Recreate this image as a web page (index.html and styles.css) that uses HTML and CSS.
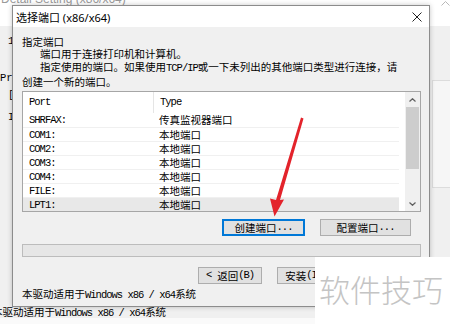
FILE: index.html
```html
<!DOCTYPE html>
<html lang="zh-CN">
<head>
  <meta charset="UTF-8" />
  <title>选择端口</title>
  <link rel="stylesheet" href="styles.css">
</head>
<body>
  <div class="screen">
    <div class="parent">
      <div class="parent-title"><span>Detail Setting (x86/x64)</span></div>
      <div class="parent-body">
        <div class="stub s1">1</div>
        <div class="stub s2">Pr</div>
        <div class="stub s3">[</div>
        <div class="stub s4">I</div>
      </div>
      <div class="parent-foot">本驱动适用于<span class="en">Windows x86 / x64</span>系统</div>
      <div class="parent-bottom"></div>
      <div class="parent-panel"></div>
      <svg class="parent-scroll" width="9" height="5" viewBox="0 0 9 5"><polyline points="0.5,4.5 4.5,0.5 8.5,4.5" fill="none" stroke="#b8b8b8" stroke-width="1"/></svg>
    </div>

    <div class="dialog">
      <div class="titlebar">
        <span class="title">选择端口 (x86/x64)</span>
        <svg class="close" width="10" height="10" viewBox="0 0 10 10"><path d="M0.5 0.5 L9.5 9.5 M9.5 0.5 L0.5 9.5" stroke="#222" stroke-width="1"/></svg>
      </div>
      <div class="content">
        <div class="heading">指定端口</div>
        <div class="line indent">端口用于连接打印机和计算机。</div>
        <div class="line indent">指定使用的端口。如果使用<span class="en">TCP/IP</span>或一下未列出的其他端口类型进行连接，请</div>
        <div class="line">创建一个新的端口。</div>

        <div class="listbox">
          <div class="rows">
            <div class="row head"><div class="cell en c1">Port</div><div class="cell en">Type</div></div>
            <div class="row"><div class="cell en c1">SHRFAX:</div><div class="cell">传真监视器端口</div></div>
            <div class="row"><div class="cell en c1">COM1:</div><div class="cell">本地端口</div></div>
            <div class="row"><div class="cell en c1">COM2:</div><div class="cell">本地端口</div></div>
            <div class="row"><div class="cell en c1">COM3:</div><div class="cell">本地端口</div></div>
            <div class="row"><div class="cell en c1">COM4:</div><div class="cell">本地端口</div></div>
            <div class="row"><div class="cell en c1">FILE:</div><div class="cell">本地端口</div></div>
            <div class="row selected"><div class="cell en c1">LPT1:</div><div class="cell">本地端口</div></div>
          </div>
          <div class="scrollbar">
            <div class="sb-arrow"><svg width="7" height="4" viewBox="0 0 7 4"><polyline points="0.5,3.5 3.5,0.7 6.5,3.5" fill="none" stroke="#606060" stroke-width="1.2"/></svg></div>
            <div class="sb-thumb"></div>
            <div class="sb-space"></div>
            <div class="sb-arrow"><svg width="7" height="4" viewBox="0 0 7 4"><polyline points="0.5,0.5 3.5,3.3 6.5,0.5" fill="none" stroke="#606060" stroke-width="1.2"/></svg></div>
          </div>
        </div>

        <div class="btn-row">
          <div class="btn default create">创建端口<span class="en">...</span></div>
          <div class="btn config">配置端口<span class="en">...</span></div>
        </div>

        <div class="progress"></div>

        <div class="btn-row nav">
          <div class="btn"><span class="en lt">&lt;</span>返回<span class="en">(B)</span></div>
          <div class="btn">安装<span class="en">(I) &gt;</span></div>
          <div class="btn">取消</div>
        </div>

        <div class="footnote">本驱动适用于<span class="en">Windows x86 / x64</span>系统</div>
      </div>
    </div>

    <svg class="arrow" width="450" height="324" viewBox="0 0 450 324">
      <polygon points="301,117.5 303.5,118.5 280,200 284,199.5 274.5,216.5 270,198.5 276,200" fill="#e3232b"/>
    </svg>

    <div class="watermark">软件技巧</div>
  </div>
</body>
</html>
```

FILE: styles.css
```css
body { margin: 0; background: #f0f0f0; font-family: "Noto Sans CJK SC", sans-serif; color: #000; }
.screen { position: relative; width: 450px; height: 324px; overflow: hidden; background: #f0f0f0; }
.en { font-family: "Liberation Mono", "Noto Sans CJK SC", monospace; letter-spacing: -1px; }

/* parent window behind the dialog */
.parent { display: flex; flex-direction: column; height: 324px; }
.parent-title { height: 26px; background: #fff; overflow: hidden; flex: none; }
.parent-title span { display: block; margin-top: -8px; padding-left: 1px; font: 12px/14px "Liberation Sans", sans-serif; color: #9a9a9a; }
.parent-body { flex: 1; font: 10.5px/13px "Liberation Mono", monospace; }
.stub { line-height: 13px; }
.s1 { margin-top: 9px; padding-left: 8px; }
.s2 { margin-top: 24px; padding-left: 0; }
.s3 { margin-top: 4px; padding-left: 8px; }
.s4 { margin-top: 9px; padding-left: 8px; }
.parent-foot { flex: none; height: 13px; line-height: 13px; font-size: 10.5px; margin-left: -8px; white-space: nowrap; }
.parent-bottom { flex: none; height: 6px; background: #fafafa; }
.parent-panel { position: absolute; left: 432px; top: 80px; width: 24px; height: 106px; border: 1px solid #dcdcdc; background: #f6f6f6; }
.parent-scroll { position: absolute; left: 441px; top: 1px; }

/* dialog window */
.dialog { position: absolute; left: 12px; top: 5px; width: 418px; height: 302px; box-sizing: border-box; border: 1px solid #8c8c8c; background: #f0f0f0; box-shadow: 0 0 5px rgba(0,0,0,0.22); display: flex; flex-direction: column; }
.titlebar { height: 21px; background: #fff; display: flex; align-items: center; justify-content: space-between; padding: 0 7px 0 3px; flex: none; }
.title { font-size: 11px; font-family: "Noto Sans", "Noto Sans CJK SC", sans-serif; color: #000; }
.close { display: block; }
.content { padding: 9px 8px 0 9px; font-size: 10.5px; }
.heading { line-height: 11px; }
.line { line-height: 13px; white-space: nowrap; }
.indent { padding-left: 18px; }

.listbox { margin-top: 3px; height: 121px; box-sizing: border-box; border: 1px solid #a6a6a6; background: #fff; display: flex; }
.rows { flex: 1; }
.row { display: flex; height: 14px; line-height: 14px; box-sizing: border-box; }
.row + .row { border-top: 1px solid #f0f0f0; }
.row.head { height: 21px; line-height: 21px; }
.row.head + .row { border-top: none; }
.row.head .c1 { border-right: 1px solid #e5e5e5; }
.cell { padding-left: 6px; white-space: nowrap; }
.c1 { width: 124px; flex: none; }
.row.selected { background: #e8e8e8; }
.scrollbar { width: 15px; margin-left: 6px; background: #f0f0f0; display: flex; flex-direction: column; }
.sb-arrow { height: 15px; display: flex; align-items: center; justify-content: center; }
.sb-arrow svg { display: block; }
.sb-thumb { height: 62px; margin: 0 1px; background: #cdcdcd; }
.sb-space { flex: 1; }

.btn-row { display: flex; justify-content: flex-end; gap: 15px; margin-top: 7px; padding-right: 10px; }
.btn { height: 17px; box-sizing: border-box; border: 1px solid #adadad; background: #e1e1e1; display: flex; align-items: center; justify-content: center; line-height: 15px; white-space: nowrap; width: 64px; }
.btn .lt { margin-right: 6px; }
.btn.create { width: 83px; }
.btn.config { width: 91px; }
.btn.default { border: 2px solid #0078d7; }
.progress { margin-top: 8px; height: 13px; box-sizing: border-box; border: 1px solid #bcbcbc; background: #e6e6e6; }
.btn-row.nav { margin-top: 10px; padding-right: 1px; }
.footnote { margin-top: 3px; line-height: 13px; white-space: nowrap; }

.arrow { position: absolute; left: 0; top: 0; pointer-events: none; }
.watermark { position: absolute; left: 315px; top: 257px; width: 135px; height: 67px; background: #fff; box-sizing: border-box; padding: 0 0 4px 4px; display: flex; align-items: center; font-size: 31px; font-weight: 300; color: #c4c4c4; white-space: nowrap; letter-spacing: 0; }
```
